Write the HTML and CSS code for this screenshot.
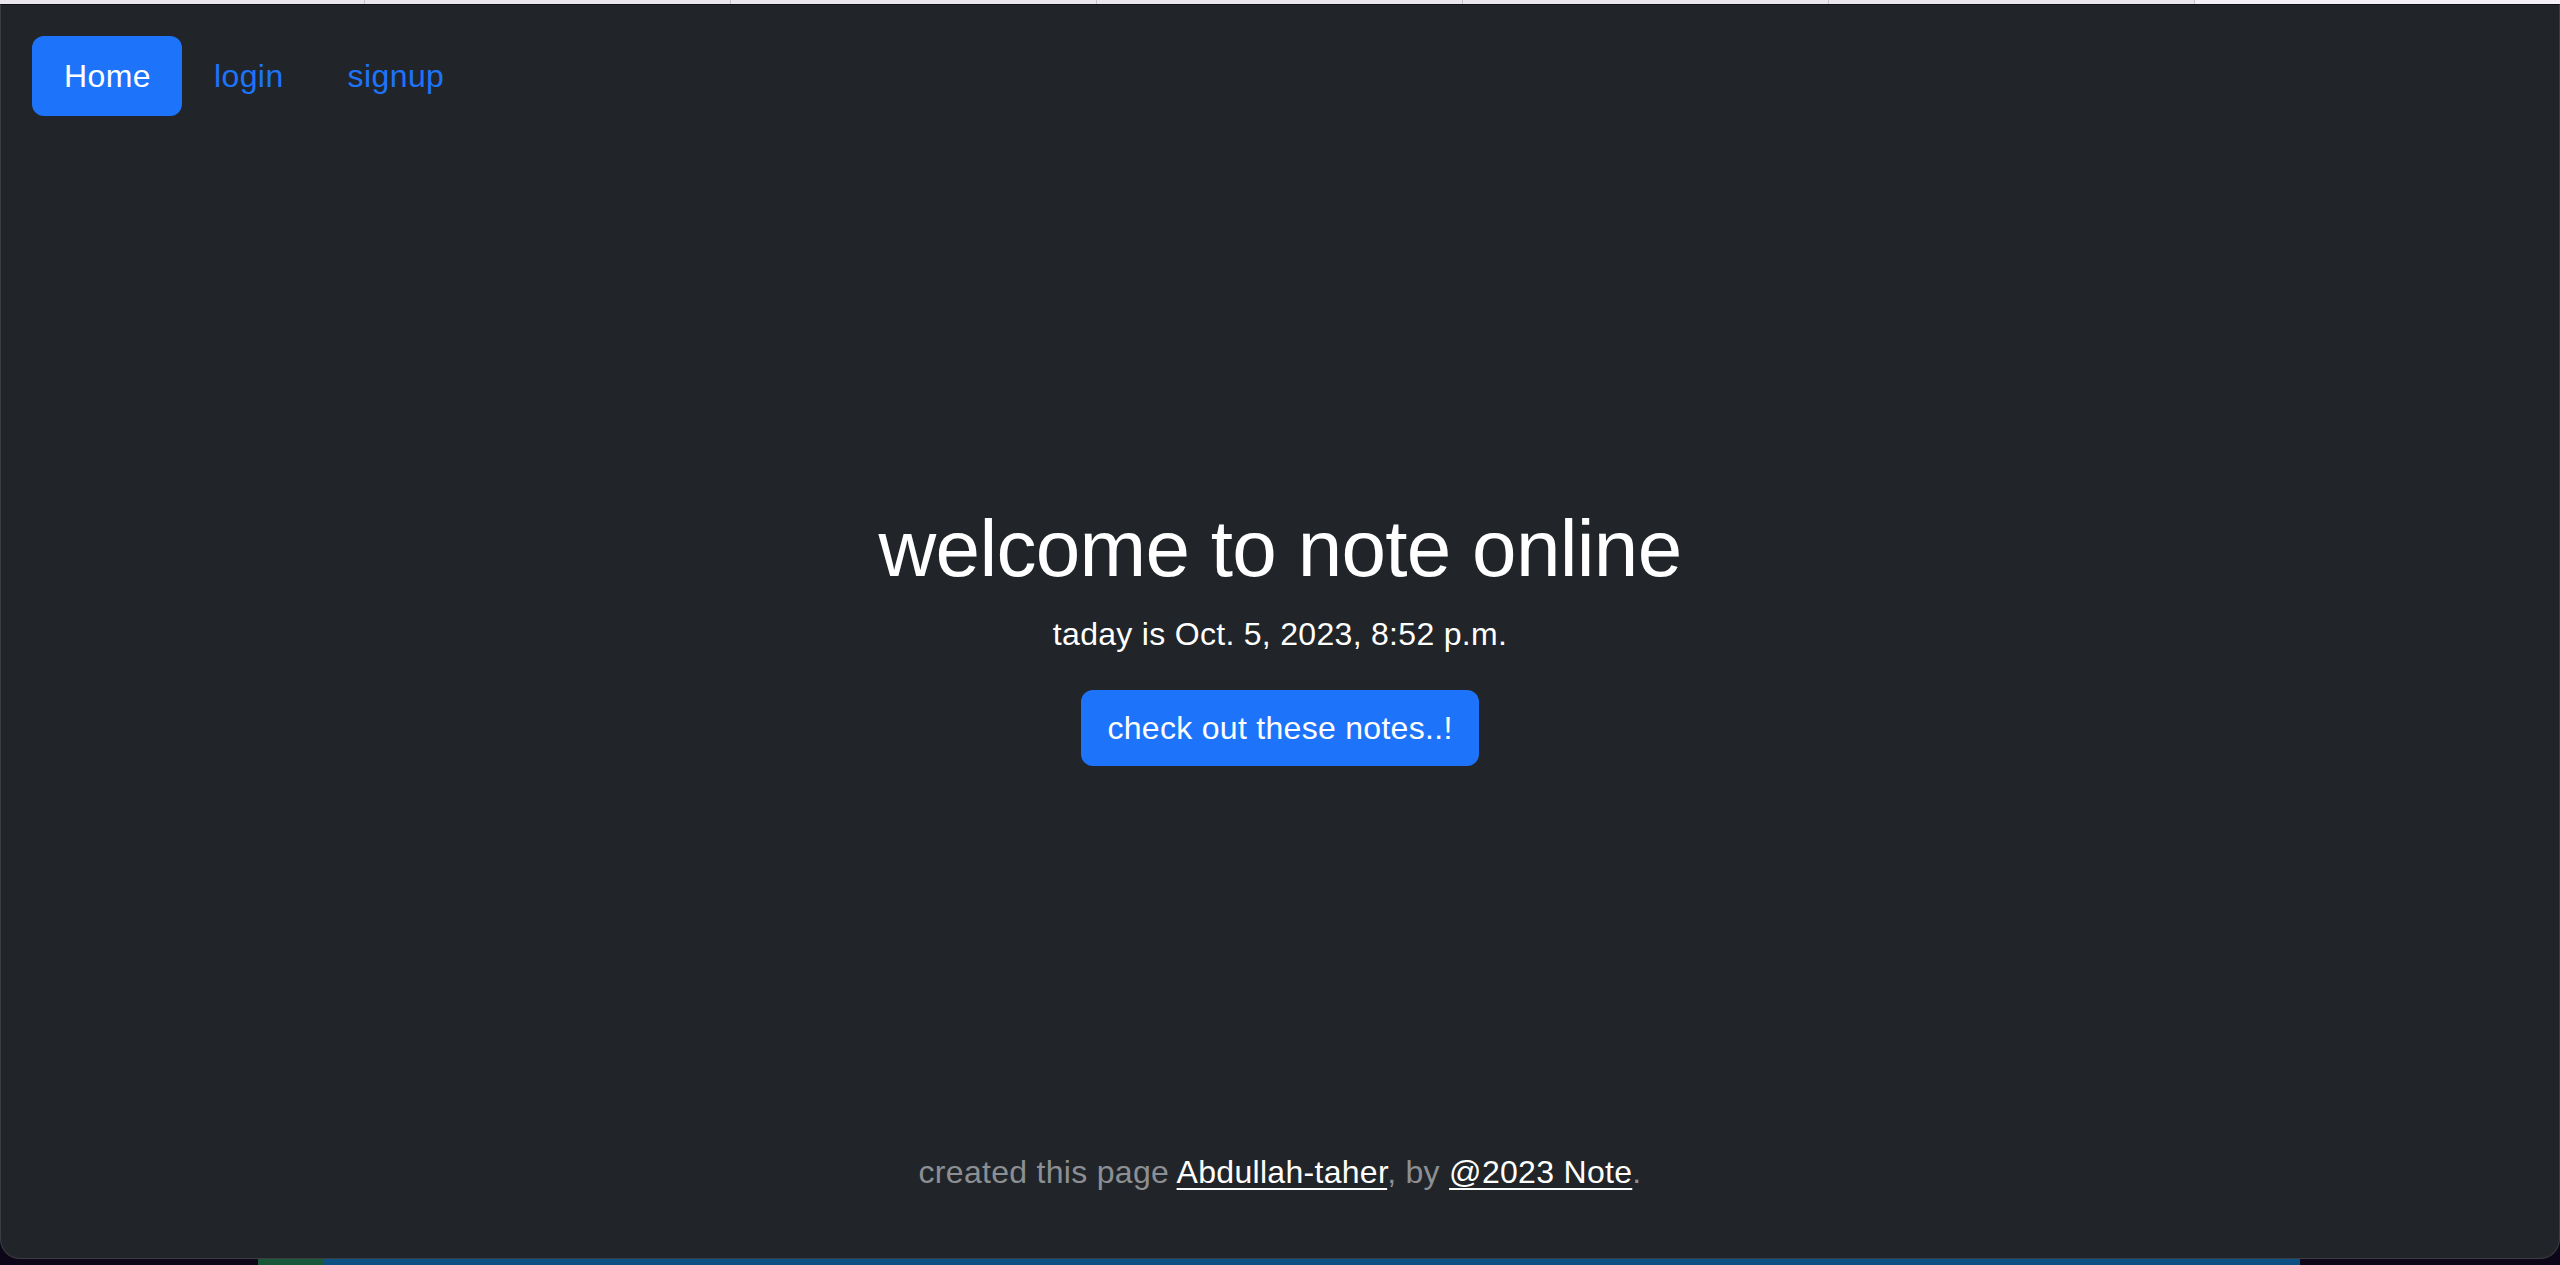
FILE: index.html
```
<!DOCTYPE html>
<html lang="en">
<head>
<meta charset="utf-8">
<title>note online</title>
<link rel="stylesheet" href="styles.css">
</head>
<body>
<div class="screen">
  <div class="tabstrip">
    <span class="tab tab-first"></span>
    <span class="tab"></span>
    <span class="tab"></span>
    <span class="tab"></span>
    <span class="tab"></span>
    <span class="tab"></span>
    <span class="tab tab-current"></span>
  </div>
  <div class="window">
    <nav class="nav">
      <a class="nav-link nav-link-active" href="#">Home</a>
      <a class="nav-link" href="#">login</a>
      <a class="nav-link" href="#">signup</a>
    </nav>
    <main class="hero">
      <h1 class="hero-title">welcome to note online</h1>
      <p class="hero-date">taday is Oct. 5, 2023, 8:52 p.m.</p>
      <a class="btn-primary" href="#">check out these notes..!</a>
    </main>
    <footer class="footer">
      <p class="footer-text">created this page <a class="footer-link" href="#">Abdullah-taher</a>, by <a class="footer-link" href="#">@2023 Note</a>.</p>
    </footer>
  </div>
  <div class="dock-strip">
    <span class="seg seg-dark-left"></span>
    <span class="seg seg-green"></span>
    <span class="seg seg-blue"></span>
    <span class="seg seg-dark-right"></span>
  </div>
</div>
</body>
</html>
```
FILE: styles.css
```
* {
  box-sizing: border-box;
}

html, body {
  margin: 0;
  padding: 0;
  height: 100%;
  overflow: hidden;
}

body {
  background: #0d0619;
  font-family: "Liberation Sans", Arial, sans-serif;
}

.screen {
  height: 1265px;
  display: flex;
  flex-direction: column;
}

.tabstrip {
  height: 4px;
  display: flex;
  background: #e9e7ec;
  flex: none;
}

.tab {
  width: 366px;
  border-right: 1px solid #c6c4c9;
}

.tab-first {
  width: 365px;
}

.tab-current {
  flex: 1;
  border-right: none;
  background: #f3f1f6;
}

.window {
  flex: 1;
  min-height: 0;
  background: #212529;
  border-top: 1px solid #0f1012;
  border-left: 1px solid #3a3d41;
  border-right: 1px solid #3a3d41;
  border-bottom: 1px solid #3a3d41;
  border-radius: 0 0 20px 20px;
  display: grid;
  grid-template-rows: auto 1fr auto;
  color: #ffffff;
}

.nav {
  display: flex;
  padding: 31px 31px 0;
}

.nav-link {
  display: block;
  padding: 16px 32px;
  font-size: 32px;
  line-height: 48px;
  letter-spacing: 0.4px;
  color: #1d74fb;
  text-decoration: none;
  border-radius: 12px;
}

.nav-link-active {
  background: #1d74fb;
  color: #ffffff;
  padding-right: 31px;
}

.hero {
  display: flex;
  flex-direction: column;
  align-items: center;
  justify-content: center;
  padding-top: 3px;
  text-align: center;
}

.hero-title {
  margin: 0 0 13px;
  font-size: 80px;
  line-height: 96px;
  font-weight: 400;
  letter-spacing: -0.7px;
  color: #ffffff;
}

.hero-date {
  margin: 0 0 32px;
  font-size: 32px;
  line-height: 48px;
  letter-spacing: 0.3px;
  color: #ffffff;
}

.btn-primary {
  display: inline-block;
  padding: 14px 26px;
  font-size: 32px;
  line-height: 48px;
  letter-spacing: 0.3px;
  color: #ffffff;
  background: #1d74fb;
  border-radius: 12px;
  text-decoration: none;
}

.footer {
  padding: 0 0 62px;
  text-align: center;
}

.footer-text {
  margin: 0;
  font-size: 32px;
  line-height: 48px;
  letter-spacing: 0.3px;
  color: #8c8f93;
}

.footer-link {
  color: #ffffff;
  text-decoration: underline;
  text-decoration-thickness: 2px;
  text-underline-offset: 5px;
}

.dock-strip {
  height: 6px;
  flex: none;
  display: flex;
}

.seg-dark-left {
  width: 258px;
  background: #0d0619;
}

.seg-green {
  width: 66px;
  background: #17583a;
}

.seg-blue {
  width: 1976px;
  background: #0c4f82;
}

.seg-dark-right {
  flex: 1;
  background: #0d0619;
}
```
